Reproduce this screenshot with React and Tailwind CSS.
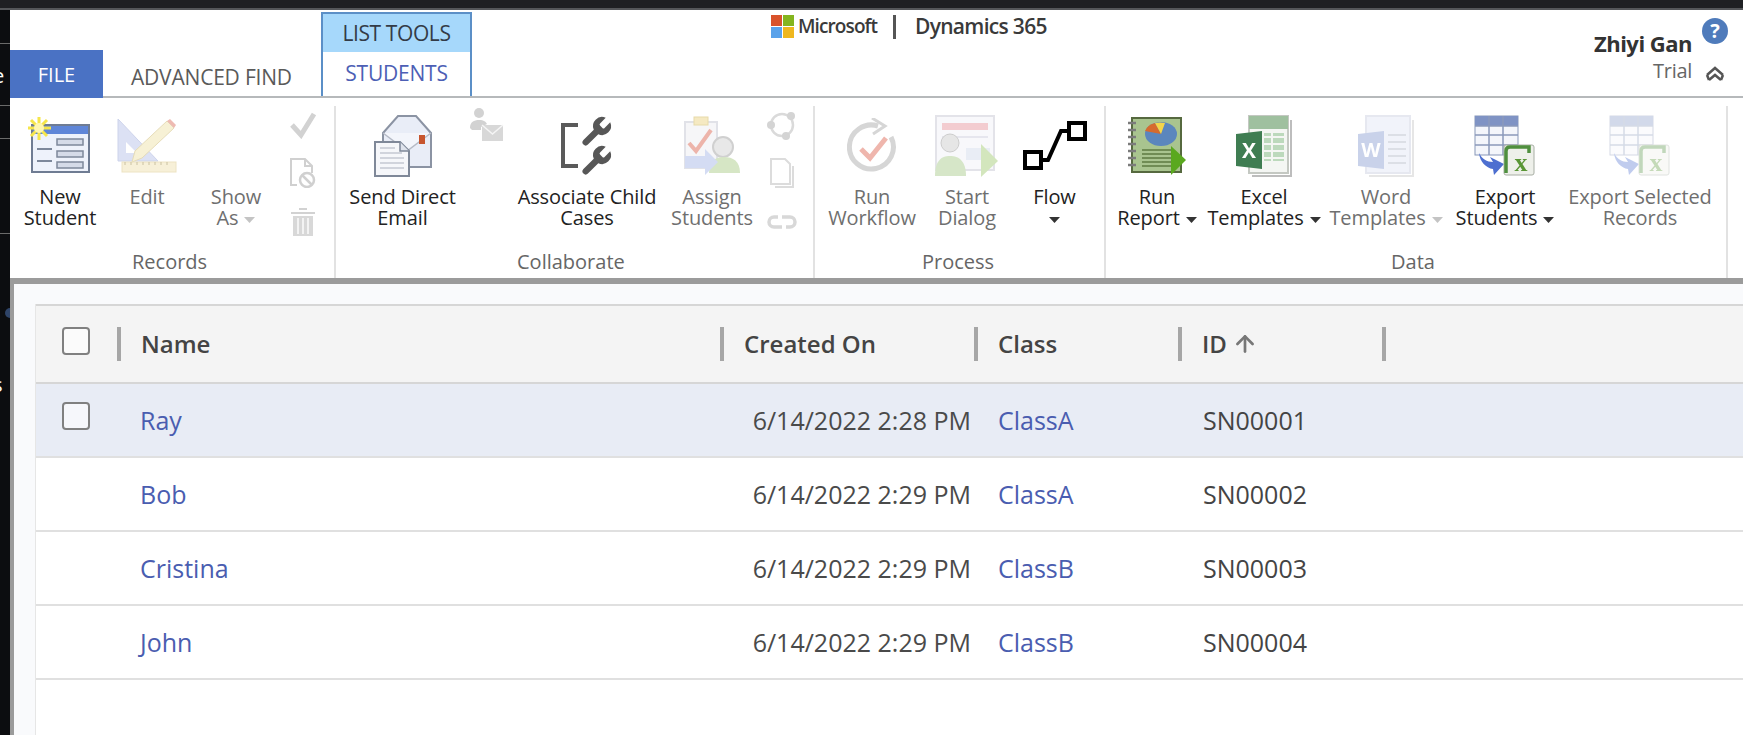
import React from "react";
import { ArrowUp } from "lucide-react";

const FONT = "font-['Open_Sans','Noto_Sans',sans-serif]";
const WRENCH =
  "M14.7 6.3a1 1 0 0 0 0 1.4l1.6 1.6a1 1 0 0 0 1.4 0l3.77-3.77a6 6 0 0 1-7.94 7.94l-6.91 6.91a2.12 2.12 0 0 1-3-3l6.91-6.91a6 6 0 0 1 7.94-7.94l-3.76 3.76z";

const students = [
  { name: "Ray", created: "6/14/2022 2:28 PM", cls: "ClassA", id: "SN00001", selected: true },
  { name: "Bob", created: "6/14/2022 2:29 PM", cls: "ClassA", id: "SN00002" },
  { name: "Cristina", created: "6/14/2022 2:29 PM", cls: "ClassB", id: "SN00003" },
  { name: "John", created: "6/14/2022 2:29 PM", cls: "ClassB", id: "SN00004" },
];

const gridCols = "grid grid-cols-[81px_603px_254px_204px_204px_1fr]";

const NewStudentIcon = () => (
  <svg width="64" height="58" viewBox="0 0 64 58" className="blur-[0.4px]">
    <rect x="4" y="8" width="57" height="47" fill="#eef2fb" stroke="#6f7c93" strokeWidth="2" />
    <rect x="5" y="9" width="55" height="8" fill="#5f86d8" />
    <rect x="29" y="22" width="26" height="6" fill="#d5dbe8" stroke="#7d889b" strokeWidth="1.5" />
    <rect x="29" y="34" width="26" height="6" fill="#d5dbe8" stroke="#7d889b" strokeWidth="1.5" />
    <rect x="29" y="45" width="26" height="6" fill="#d5dbe8" stroke="#7d889b" strokeWidth="1.5" />
    <path d="M9 32h15M9 44h15" stroke="#7d889b" strokeWidth="2" />
    <path d="M11 0v23M0 11h23M3 3l16 16M19 3L3 19" stroke="#f6e64a" strokeWidth="3" />
    <circle cx="11" cy="11" r="5" fill="#fff7b0" />
  </svg>
);

const EditIcon = () => (
  <svg width="60" height="56" viewBox="0 0 60 56" className="blur-[0.5px] opacity-80">
    <path d="M1 1v42h40z" fill="#d4daf2" stroke="#c0c8e6" />
    <path d="M9 24v11h11z" fill="#fff" />
    <rect x="5" y="44" width="54" height="10" fill="#f6edcf" stroke="#e8dcb4" />
    <path d="M8 44v3M14 44v3M20 44v3M26 44v3M32 44v3M38 44v3M44 44v3M50 44v3" stroke="#bdb28a" />
    <path d="M15 44l3-11L50 3l7 7-32 30z" fill="#f6eecb" stroke="#dfd3a6" />
    <path d="M50 3l3-2 6 6-2 3z" fill="#eaa9a0" />
  </svg>
);

const CheckSmall = () => (
  <svg width="28" height="28" viewBox="0 0 28 28" className="blur-[0.4px]">
    <path d="M3 14l9 10L25 3" fill="none" stroke="#d2d2d2" strokeWidth="5" />
  </svg>
);

const DocBlocked = () => (
  <svg width="26" height="30" viewBox="0 0 26 30" className="blur-[0.3px]">
    <path d="M7 27H1V1h14l7 7v7" fill="none" stroke="#d0d0d0" strokeWidth="2" />
    <path d="M15 1v7h7" fill="none" stroke="#d0d0d0" strokeWidth="2" />
    <circle cx="17" cy="22" r="7" fill="none" stroke="#d0d0d0" strokeWidth="2.5" />
    <path d="M12 17l10 10" stroke="#d0d0d0" strokeWidth="2.5" />
  </svg>
);

const TrashSmall = () => (
  <svg width="26" height="28" viewBox="0 0 26 28" className="blur-[0.3px]">
    <path d="M1 5h24M9 1h8" stroke="#d2d2d2" strokeWidth="2" />
    <path d="M3 8h20v20H3z" fill="#d8d8d8" />
    <path d="M8 10v16M13 10v16M18 10v16" stroke="#f3f3f3" strokeWidth="2" />
  </svg>
);

const SendEmailIcon = () => (
  <svg width="58" height="62" viewBox="0 0 58 62" className="blur-[0.4px]">
    <path d="M9 18L24 1h18l15 17v34H9z" fill="#e9edf7" stroke="#8b93a3" strokeWidth="2" />
    <path d="M9 18l24 18 24-18" fill="#f3f5fb" stroke="#b5bac6" strokeWidth="1.5" />
    <rect x="45" y="20" width="6" height="9" fill="#c7552e" />
    <path d="M1 27h25l9 9v25H1z" fill="#f6f7fa" stroke="#7f8898" strokeWidth="2" />
    <path d="M26 27v9h9" fill="#dfe3ec" stroke="#7f8898" strokeWidth="1.5" />
    <path d="M6 33h15M6 38h22M6 43h24M6 48h24M6 53h24" stroke="#c5c9d2" strokeWidth="1.5" />
  </svg>
);

const PersonMailSmall = () => (
  <svg width="34" height="34" viewBox="0 0 34 34" className="blur-[0.3px]">
    <circle cx="9" cy="5" r="5" fill="#d2d2d2" />
    <path d="M0 20c0-6 4-8 9-8s7 2 8 4l-6 3v3H2z" fill="#d2d2d2" />
    <rect x="12" y="17" width="21" height="16" fill="#d8d8d8" />
    <path d="M12 17l10.5 9L33 17" fill="none" stroke="#f5f5f5" strokeWidth="1.5" />
  </svg>
);

const AssociateIcon = () => (
  <svg width="54" height="64" viewBox="0 0 54 64" className="blur-[0.3px]">
    <path d="M18 11H3v41h15" fill="none" stroke="#5a5a5a" strokeWidth="4" />
    <g fill="#575757">
      <path d={WRENCH} transform="translate(18 0) scale(1.5)" />
      <path d={WRENCH} transform="translate(18 29) scale(1.5)" />
    </g>
  </svg>
);

const AssignIcon = () => (
  <svg width="58" height="60" viewBox="0 0 58 60" className="blur-[0.5px] opacity-85">
    <rect x="2" y="6" width="32" height="46" fill="#f5f5f7" stroke="#dcdee4" strokeWidth="2" />
    <rect x="11" y="1" width="14" height="8" fill="#f4e6b8" stroke="#e4d49c" />
    <path d="M6 27l7 8L28 14" fill="none" stroke="#eaa79c" strokeWidth="4" />
    <circle cx="40" cy="31" r="10" fill="#e4e4e4" stroke="#c8c8c8" strokeWidth="2" />
    <path d="M26 57c0-12 6-16 15-16s16 4 16 16z" fill="#cfe2bb" />
    <path d="M2 40h20v-7l13 13-13 13v-7H2z" fill="#cdd7f2" />
  </svg>
);

const RingSmall = () => (
  <svg width="30" height="30" viewBox="0 0 30 30" className="blur-[0.3px]">
    <circle cx="15" cy="15" r="11" fill="none" stroke="#dadada" strokeWidth="2.5" />
    <circle cx="24" cy="6" r="4" fill="#d4d4d4" />
    <circle cx="4" cy="15" r="4" fill="#d4d4d4" />
    <circle cx="19" cy="26" r="4" fill="#d4d4d4" />
  </svg>
);

const CopySmall = () => (
  <svg width="24" height="30" viewBox="0 0 24 30" className="blur-[0.3px]">
    <path d="M1 1h14l5 5v20H1z" fill="#fff" stroke="#dcdcdc" strokeWidth="2" />
    <path d="M23 8v21H5" fill="none" stroke="#dcdcdc" strokeWidth="2" />
  </svg>
);

const LinkSmall = () => (
  <svg width="30" height="16" viewBox="0 0 30 16" className="blur-[0.3px]">
    <path d="M11 3H7a5 5 0 0 0 0 10h8M19 13h4a5 5 0 0 0 0-10h-8" fill="none" stroke="#d8d8d8" strokeWidth="3.5" />
  </svg>
);

const WorkflowIcon = () => (
  <svg width="50" height="56" viewBox="0 0 50 56" className="blur-[0.5px]">
    <path d="M31 8A22 22 0 1 0 44 19" fill="none" stroke="#d6d6d6" strokeWidth="5" />
    <path d="M25 0l13 8-12 8" fill="none" stroke="#d6d6d6" strokeWidth="3" />
    <path d="M14 31l9 9 16-20" fill="none" stroke="#efb6ad" strokeWidth="5" />
  </svg>
);

const DialogIcon = () => (
  <svg width="64" height="62" viewBox="0 0 64 62" className="blur-[0.5px]">
    <rect x="1" y="1" width="58" height="54" fill="#f8f8fb" stroke="#e3e3e9" strokeWidth="2" />
    <rect x="7" y="8" width="46" height="7" fill="#f3ccd0" />
    <path d="M7 22h46" stroke="#e6e6ee" strokeWidth="2" />
    <rect x="31" y="33" width="24" height="12" fill="#e9edf5" />
    <circle cx="15" cy="28" r="9" fill="#e6e6e6" stroke="#cdcdcd" />
    <path d="M0 61c0-15 6-20 15-20s16 5 16 20z" fill="#d6e6c8" />
    <path d="M46 29l17 17-17 16z" fill="#d3e6bd" />
  </svg>
);

const FlowIcon = () => (
  <svg width="64" height="50" viewBox="0 0 64 50">
    <rect x="2" y="31" width="16" height="16" fill="#fff" stroke="#000" strokeWidth="4" />
    <rect x="46" y="2" width="16" height="16" fill="#fff" stroke="#000" strokeWidth="4" />
    <path d="M18 39h7L38 10h8" fill="none" stroke="#000" strokeWidth="4" />
  </svg>
);

const ReportIcon = () => (
  <svg width="60" height="60" viewBox="0 0 60 60" className="blur-[0.3px]">
    <rect x="5" y="2" width="49" height="54" fill="#a9c48f" stroke="#56693f" strokeWidth="2" />
    <path d="M1 7h8M1 14h8M1 21h8M1 28h8M1 35h8M1 42h8M1 49h8" stroke="#7b7b7b" strokeWidth="2.5" />
    <ellipse cx="34" cy="18" rx="16" ry="12" fill="#5b86bd" />
    <path d="M34 18L18 15a16 12 0 0 1 10-8z" fill="#d66a2e" />
    <path d="M34 18l-6-11a16 12 0 0 1 10 0z" fill="#f3d54a" />
    <path d="M15 34h30M15 38h30M15 42h30M15 46h30M15 50h30" stroke="#5d7a42" strokeWidth="1.5" />
    <path d="M44 30l15 14-15 15z" fill="#5aa81f" />
  </svg>
);

const ExcelIcon = () => (
  <svg width="56" height="62" viewBox="0 0 56 62" className="blur-[0.3px]">
    <path d="M13 1h39v57H13z" fill="#f4f6f3" stroke="#c4c8c2" strokeWidth="2" />
    <path d="M55 5v56H16" fill="none" stroke="#bdbdbd" strokeWidth="2" />
    <rect x="13" y="1" width="39" height="13" fill="#9fc09f" />
    <path d="M28 18h20v28H28z" fill="#bcd9bc" />
    <path d="M28 22h20M28 29h20M28 36h20M28 43h20M36 18v28" stroke="#f4f6f3" strokeWidth="2" />
    <path d="M0 19l26-3v38L0 51z" fill="#3f7d52" />
    <text x="13" y="43" textAnchor="middle" fontSize="21" fontWeight="700" fill="#fff" fontFamily="Open Sans, sans-serif">X</text>
  </svg>
);

const WordIcon = () => (
  <svg width="56" height="62" viewBox="0 0 56 62" className="blur-[0.3px]">
    <path d="M8 1h44v57H8z" fill="#f1f3fa" stroke="#e6e8f0" strokeWidth="2" />
    <path d="M55 5v56H11" fill="none" stroke="#e6e6e6" strokeWidth="2" />
    <path d="M30 20h18M30 27h18M30 34h18M30 41h18M30 48h18" stroke="#dcdfe6" strokeWidth="2" />
    <path d="M0 19l26-3v38L0 51z" fill="#c9d2ea" />
    <text x="13" y="42" textAnchor="middle" fontSize="20" fontWeight="700" fill="#fff" fontFamily="Open Sans, sans-serif">W</text>
  </svg>
);

const ExportIcon = ({ faded }) => (
  <svg width="62" height="62" viewBox="0 0 62 62" className={faded ? "blur-[0.5px] opacity-35" : "blur-[0.3px]"}>
    <rect x="1" y="1" width="43" height="39" fill="#f4f6fb" stroke="#8897b8" />
    <rect x="1" y="1" width="43" height="10" fill="#7f93c4" />
    <path d="M15 1v39M29 1v39M1 11h43M1 20h43M1 30h43" stroke="#8a99bb" strokeWidth="1.5" />
    <path d="M5 38c3 6 8 9 14 9l-3-5 14 7-10 11-1-6C12 53 6 47 5 38z" fill="#4d6fd0" />
    <rect x="30" y="30" width="30" height="30" rx="2" fill="#eef0ea" stroke="#a8aea4" />
    <path d="M32 58V36q0-4 4-4h19v6" fill="none" stroke="#4f8f3e" strokeWidth="3.5" />
    <text x="47" y="56" textAnchor="middle" fontSize="26" fontWeight="700" fill="#5a9636" fontFamily="Liberation Serif, serif">x</text>
  </svg>
);

const Caret = ({ light }) => (
  <svg width="11" height="6" viewBox="0 0 11 6" className="inline-block ml-[6px] align-middle">
    <path d="M0 0h11L5.5 6z" fill={light ? "#c4c4c4" : "#333"} />
  </svg>
);

const RibbonButton = ({ width, icon, disabled, children }) => (
  <div className={`${width} flex flex-col items-center shrink-0`}>
    <div className="h-[80px] flex items-center justify-center">{icon}</div>
    <div
      className={`text-center text-[20px] leading-[21px] tracking-[-0.1px] whitespace-nowrap ${
        disabled ? "text-[#6f6f6f]" : "text-[#222222]"
      }`}
    >
      {children}
    </div>
  </div>
);

const SmallColumn = ({ width, first, second, third }) => (
  <div className={`${width} flex flex-col items-center shrink-0 pt-[4px]`}>
    <div className="h-[30px] flex items-center">{first}</div>
    <div className="h-[30px] mt-[18px] flex items-center">{second}</div>
    <div className="h-[30px] mt-[19px] flex items-center">{third}</div>
  </div>
);

const RibbonGroup = ({ width, label, labelClass, border = true, children }) => (
  <div className={`${width} shrink-0 h-[172px] mt-[8px] flex flex-col ${border ? "border-r-2 border-[#e2e2e2]" : ""}`}>
    <div className="flex flex-1">{children}</div>
    <div className={`h-[30px] text-[20px] leading-[28px] text-[#666666] ${labelClass}`}>{label}</div>
  </div>
);

const Checkbox = () => <div className="w-[28px] h-[28px] ml-[26px] rounded-[4px] border-2 border-[#808080] bg-white/60" />;

const ColumnHead = ({ label, icon }) => (
  <div className="flex items-center">
    <div className="w-[4px] h-[34px] bg-[#a6a6a6] shrink-0" />
    <div className="pl-[20px] flex items-center gap-[5px] text-[24px] font-semibold text-[#444444]">
      {label}
      {icon}
    </div>
  </div>
);

const App = () => {
  return (
    <div className={`${FONT} w-[1743px] h-[735px] overflow-hidden flex flex-col bg-[#0c0d10]`}>
      <div className="h-[10px] shrink-0 bg-[#1f2023] border-b-2 border-[#55575a]" />
      <div className="flex flex-1 min-h-0">
        <div className="w-[10px] shrink-0 relative overflow-hidden bg-[#0c0d10]">
          <div className="absolute left-0 top-[33px] w-full h-[1px] bg-[#6a6a6a]" />
          <div className="absolute left-0 top-[95px] w-full h-[1px] bg-[#6a6a6a]" />
          <div className="absolute left-0 top-[128px] w-full h-[1px] bg-[#6a6a6a]" />
          <div className="absolute left-0 top-[223px] w-full h-[1px] bg-[#6a6a6a]" />
          <div className="absolute left-[-7px] top-[53px] text-[20px] leading-[26px] text-white">e</div>
          <div className="absolute left-[5px] top-[298px] w-[10px] h-[10px] rounded-full bg-[#2f4468]" />
          <div className="absolute left-[-7px] top-[362px] text-[20px] leading-[26px] text-white">s</div>
        </div>

        <div className="flex-1 min-w-0 flex flex-col bg-white">
          {/* tabs row */}
          <div className="h-[88px] shrink-0 flex items-start border-b-2 border-[#b6b9bb]">
            <div className="w-[93px] h-[48px] mt-[40px] pt-[2px] relative bg-[#4a72c4] text-white text-[20px] flex items-center justify-center">
              FILE
            </div>
            <div className="w-[218px] mt-[53px] pl-[28px] text-[21px] leading-[28px] text-[#5a5a5a] tracking-[-0.2px] whitespace-nowrap">
              ADVANCED FIND
            </div>
            <div className="w-[151px] h-[84px] mt-[2px] border-2 border-b-0 border-[#5b8fc7] flex flex-col">
              <div className="h-[38px] shrink-0 pt-[2px] bg-[#a6d8fb] flex items-center justify-center text-[21px] text-[#333b47] tracking-[-0.4px]">
                LIST TOOLS
              </div>
              <div className="flex-1 flex items-center justify-center text-[21px] text-[#4d5fb5] tracking-[-0.2px] pb-[1px]">
                STUDENTS
              </div>
            </div>
            <div className="ml-[299px] mt-[5px] flex items-center h-[23px]">
              <svg width="23" height="23" viewBox="0 0 23 23" className="shrink-0">
                <rect width="11" height="11" fill="#d9532b" />
                <rect x="12" width="11" height="11" fill="#84b51f" />
                <rect y="12" width="11" height="11" fill="#5aa2ea" />
                <rect x="12" y="12" width="11" height="11" fill="#efb71e" />
              </svg>
              <span className="ml-[4px] w-[95px] text-[19px] font-semibold text-[#3a3a3a] tracking-[-0.9px]">Microsoft</span>
              <div className="w-[3px] h-[24px] bg-[#555555]" />
              <span className="ml-[19px] text-[21px] font-semibold text-[#3a3a3a] tracking-[-0.7px] whitespace-nowrap">
                Dynamics 365
              </span>
            </div>
            <div className="ml-auto flex items-start">
              <div className="flex flex-col items-end mt-[20px]">
                <div className="text-[22px] leading-[26px] font-bold text-[#333333] tracking-[-0.5px]">Zhiyi Gan</div>
                <div className="text-[20px] leading-[26px] text-[#666666] mt-[2px] tracking-[-0.3px]">Trial</div>
              </div>
              <div className="w-[51px] flex flex-col items-start pl-[10px]">
                <div className="w-[26px] h-[26px] mt-[8px] rounded-full bg-[#4f7bbb] text-white text-[20px] font-bold leading-[26px] text-center">
                  ?
                </div>
                <svg width="20" height="16" viewBox="0 0 20 16" className="mt-[22px] ml-[3px]">
                  <path d="M2 9l8-7 8 7M4 14l6-5 6 5" fill="none" stroke="#555555" strokeWidth="2.5" />
                  <path d="M2 9l2 5M18 9l-2 5" stroke="#555555" strokeWidth="2.5" />
                </svg>
              </div>
            </div>
          </div>

          {/* ribbon */}
          <div className="h-[180px] shrink-0 flex">
            <RibbonGroup width="w-[326px]" label="Records" labelClass="pl-[122px]">
              <RibbonButton width="w-[100px]" icon={<NewStudentIcon />}>
                New
                <br />
                Student
              </RibbonButton>
              <RibbonButton width="w-[74px]" icon={<EditIcon />} disabled>
                Edit
              </RibbonButton>
              <RibbonButton width="w-[104px]" icon={<div />} disabled>
                Show
                <br />
                As
                <Caret light />
              </RibbonButton>
              <SmallColumn width="w-[30px]" first={<CheckSmall />} second={<DocBlocked />} third={<TrashSmall />} />
            </RibbonGroup>

            <RibbonGroup width="w-[479px]" label="Collaborate" labelClass="pl-[181px]">
              <RibbonButton width="w-[133px]" icon={<SendEmailIcon />}>
                Send Direct
                <br />
                Email
              </RibbonButton>
              <div className="w-[36px] shrink-0 flex justify-center pt-[2px]">
                <div>
                  <PersonMailSmall />
                </div>
              </div>
              <RibbonButton width="w-[164px]" icon={<AssociateIcon />}>
                Associate Child
                <br />
                Cases
              </RibbonButton>
              <RibbonButton width="w-[86px]" icon={<AssignIcon />} disabled>
                Assign
                <br />
                Students
              </RibbonButton>
              <SmallColumn width="w-[54px]" first={<RingSmall />} second={<CopySmall />} third={<LinkSmall />} />
            </RibbonGroup>

            <RibbonGroup width="w-[291px]" label="Process" labelClass="pl-[107px]">
              <RibbonButton width="w-[114px]" icon={<WorkflowIcon />} disabled>
                Run
                <br />
                Workflow
              </RibbonButton>
              <RibbonButton width="w-[76px]" icon={<DialogIcon />} disabled>
                Start
                <br />
                Dialog
              </RibbonButton>
              <RibbonButton width="w-[99px]" icon={<FlowIcon />}>
                Flow
                <br />
                <svg width="11" height="6" viewBox="0 0 11 6" className="inline-block align-middle">
                  <path d="M0 0h11L5.5 6z" fill="#333" />
                </svg>
              </RibbonButton>
            </RibbonGroup>

            <RibbonGroup width="w-[622px]" label="Data" labelClass="pl-[285px]">
              <RibbonButton width="w-[102px]" icon={<ReportIcon />}>
                Run
                <br />
                Report
                <Caret />
              </RibbonButton>
              <RibbonButton width="w-[112px]" icon={<ExcelIcon />}>
                Excel
                <br />
                Templates
                <Caret />
              </RibbonButton>
              <RibbonButton width="w-[132px]" icon={<WordIcon />} disabled>
                Word
                <br />
                Templates
                <Caret light />
              </RibbonButton>
              <RibbonButton width="w-[106px]" icon={<ExportIcon />}>
                Export
                <br />
                Students
                <Caret />
              </RibbonButton>
              <RibbonButton width="w-[164px]" icon={<ExportIcon faded />} disabled>
                Export Selected
                <br />
                Records
              </RibbonButton>
            </RibbonGroup>
          </div>

          <div className="h-[6px] shrink-0 bg-[#9b9b9b]" />

          {/* grid */}
          <div className="flex-1 min-h-0 flex border-l-4 border-[#9b9b9b] bg-[#f9fafc] pt-[20px] pl-[21px]">
            <div className="flex-1 min-w-0 bg-white border-l border-[#e6e6e6] self-stretch">
              <div className={`${gridCols} h-[80px] bg-[#f4f4f4] border-t-2 border-b-2 border-[#d6d6d6]`}>
                <div className="flex items-center">
                  <div className="-mt-[6px]">
                    <Checkbox />
                  </div>
                </div>
                <ColumnHead label="Name" />
                <ColumnHead label="Created On" />
                <ColumnHead label="Class" />
                <ColumnHead
                  label="ID"
                  icon={<ArrowUp size={26} strokeWidth={2.5} className="text-[#777777]" />}
                />
                <div className="flex items-center">
                  <div className="w-[4px] h-[34px] bg-[#a6a6a6]" />
                </div>
              </div>

              {students.map((s) => (
                <div
                  key={s.id}
                  className={`${gridCols} h-[74px] items-center border-b-2 border-[#e0e0e0] text-[25px] ${
                    s.selected ? "bg-[#e8ecf5]" : "bg-white"
                  }`}
                >
                  <div className="-mt-[8px]">{s.selected && <Checkbox />}</div>
                  <div className="pl-[23px] pt-[2px] text-[#4a5db0]">{s.name}</div>
                  <div className="pr-[3px] pt-[2px] text-right text-[#4a4a4a] whitespace-nowrap">{s.created}</div>
                  <div className="pl-[24px] pt-[2px] text-[#4a5db0]">{s.cls}</div>
                  <div className="pl-[25px] pt-[2px] text-[#444444]">{s.id}</div>
                  <div />
                </div>
              ))}
            </div>
          </div>
        </div>
      </div>
    </div>
  );
};

export default App;
